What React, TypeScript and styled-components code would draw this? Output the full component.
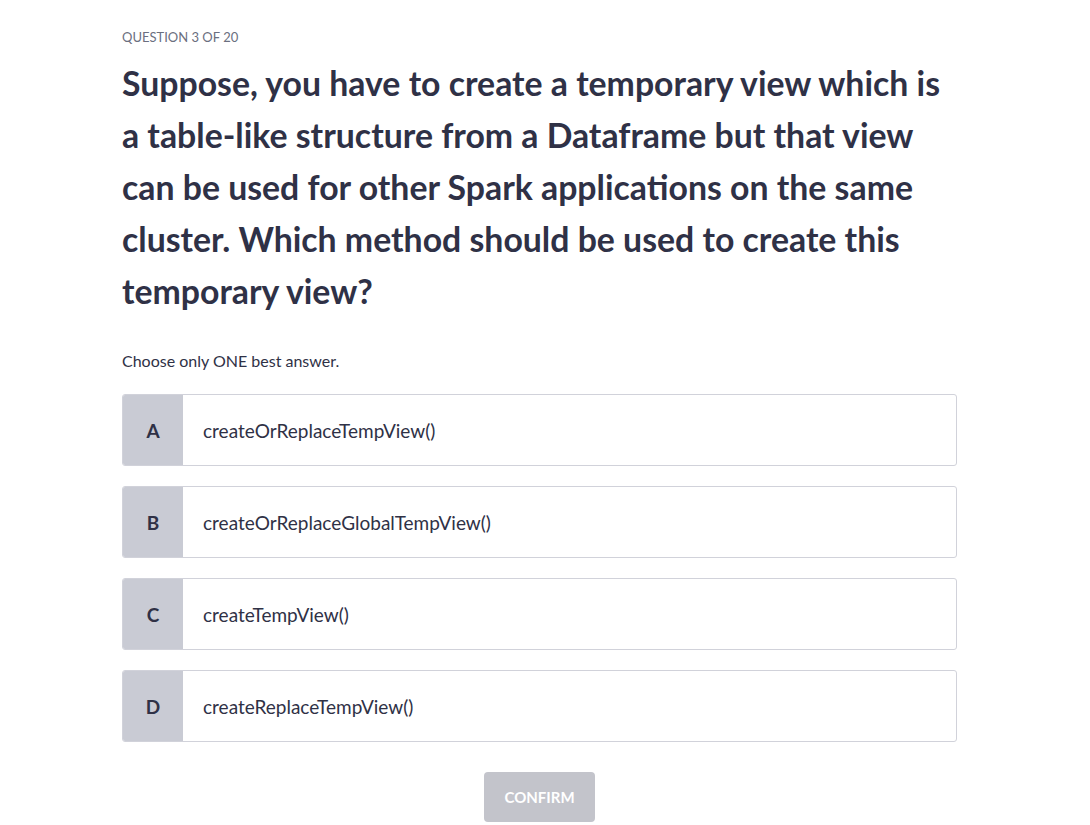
import styled, { createGlobalStyle } from "styled-components";

// Opções de resposta da questão
const options = [
  { letter: "A", text: "createOrReplaceTempView()" },
  { letter: "B", text: "createOrReplaceGlobalTempView()" },
  { letter: "C", text: "createTempView()" },
  { letter: "D", text: "createReplaceTempView()" },
];

export default function App() {
  return (
    <>
      <GlobalStyle />
      <Page>
        <Counter>Question 3 of 20</Counter>
        <Question>
          Suppose, you have to create a temporary view which is a table-like structure from a
          Dataframe but that view can be used for other Spark applications on the same cluster.
          Which method should be used to create this temporary view?
        </Question>
        <Hint>Choose only ONE best answer.</Hint>
        <OptionList>
          {options.map((option) => (
            <Option key={option.letter}>
              <Letter>{option.letter}</Letter>
              <OptionText>{option.text}</OptionText>
            </Option>
          ))}
        </OptionList>
        <Footer>
          <ConfirmButton disabled>Confirm</ConfirmButton>
        </Footer>
      </Page>
    </>
  );
}

const GlobalStyle = createGlobalStyle`
  body {
    margin: 0;
    background: #fff;
    font-family: Lato, "Liberation Sans", sans-serif;
    color: #2f3146;
  }
`;

const Page = styled.div`
  width: 835px;
  margin: 0 0 0 122px;
  padding-top: 29px;
  display: flex;
  flex-direction: column;
`;

const Counter = styled.div`
  font-size: 13px;
  line-height: 16px;
  text-transform: uppercase;
  color: #6b6f80;
`;

const Question = styled.h1`
  margin: 12px 0 0;
  font-size: 33.8px;
  line-height: 52px;
  font-weight: 700;
  color: #2f3146;
`;

const Hint = styled.p`
  margin: 34px 0 0;
  font-size: 16px;
  line-height: 20px;
`;

const OptionList = styled.div`
  margin-top: 23px;
  display: flex;
  flex-direction: column;
  gap: 20px;
`;

const Option = styled.div`
  display: flex;
  height: 72px;
  border: 1px solid #d1d2da;
  border-radius: 3px;
  overflow: hidden;
  box-sizing: border-box;
  background: #fff;
`;

const Letter = styled.div`
  width: 60px;
  flex-shrink: 0;
  display: flex;
  align-items: center;
  justify-content: center;
  background: #c9cbd4;
  font-size: 19px;
  font-weight: 700;
  color: #2f3146;
`;

const OptionText = styled.div`
  display: flex;
  align-items: center;
  padding-left: 20px;
  font-size: 19px;
  color: #2f3146;
`;

const Footer = styled.div`
  display: flex;
  justify-content: center;
  margin-top: 30px;
`;

const ConfirmButton = styled.button`
  width: 111px;
  height: 50px;
  border: none;
  border-radius: 4px;
  background: #c3c4cb;
  color: #fff;
  font-family: inherit;
  font-size: 15px;
  font-weight: 700;
  text-transform: uppercase;
  cursor: not-allowed;
`;
